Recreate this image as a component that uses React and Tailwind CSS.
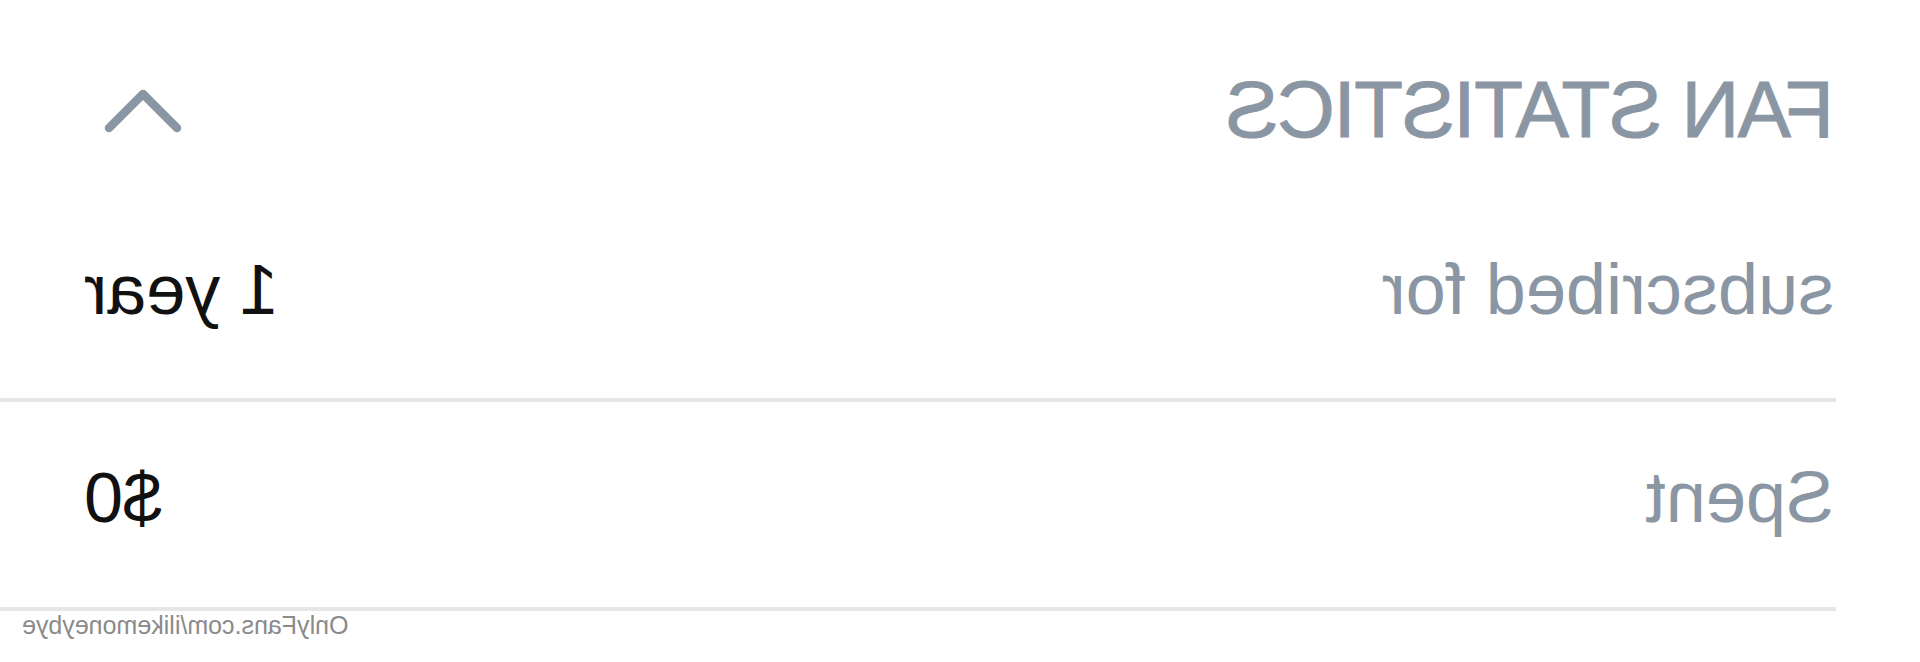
import React from 'react';

const stats = [
  { label: 'subscribed for', value: '1 year', pad: 'pt-[62px] pb-[73px]' },
  { label: 'Spent', value: '$0', pad: 'pt-[60px] pb-[74px]' },
];

const ChevronUp = () => (
  <svg width="80" height="52" viewBox="0 0 80 52" fill="none">
    <polyline
      points="6,44 40,10 74,44"
      stroke="#8a96a3"
      strokeWidth="8.5"
      strokeLinecap="round"
      strokeLinejoin="round"
    />
  </svg>
);

const App = () => {
  return (
    <div className="w-[1920px] h-[662px] bg-white overflow-hidden -scale-x-100 font-['Liberation_Sans',Arial,sans-serif]">
      {/* header */}
      <div className="flex items-center justify-between pl-[86px] pr-[103px] pt-[70px] pb-[42px]">
        <h2 className="text-[80px] leading-none tracking-[-1.5px] text-[#8a96a3] font-normal [-webkit-text-stroke:1px_#8a96a3]">
          FAN STATISTICS
        </h2>
        <ChevronUp />
      </div>

      {/* rows */}
      <div className="ml-[84px]">
        {stats.map((row) => (
          <div
            key={row.label}
            className={`flex items-center justify-between ${row.pad} pl-[2px] pr-[84px] border-b-4 border-[#e4e6e8]`}
          >
            <span className="text-[72px] leading-[71px] text-[#8a96a3]">{row.label}</span>
            <span className="text-[70px] leading-none text-[#111]">{row.value}</span>
          </div>
        ))}
      </div>

      <div className="flex justify-end pr-[22px] pt-[2px]">
        <span className="text-[25px] leading-[25px] text-[#8a8a8a]">OnlyFans.com/ilikemoneybye</span>
      </div>
    </div>
  );
};

export default App;
